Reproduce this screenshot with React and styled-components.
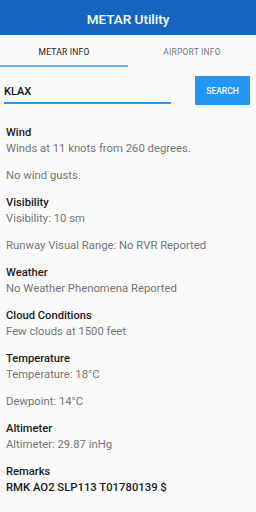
import React from 'react';
import styled, { createGlobalStyle } from 'styled-components';

const GlobalStyle = createGlobalStyle`
  html, body {
    margin: 0;
    padding: 0;
    background: #fafafa;
  }
  body {
    font-family: Roboto, 'Noto Sans', sans-serif;
  }
`;

const Screen = styled.div`
  width: 256px;
  height: 512px;
  background: #fafafa;
  overflow: hidden;
`;

const AppBar = styled.header`
  height: 35px;
  padding-top: 2px;
  box-sizing: border-box;
  background: #1565c0;
  color: #fff;
  display: flex;
  align-items: center;
  justify-content: center;
  font-size: 13.5px;
  font-weight: 500;
  box-shadow: 0 1px 2px rgba(0, 0, 0, 0.2);
`;

const Tabs = styled.nav`
  display: flex;
  height: 32px;
  background: #fafafa;
`;

const Tab = styled.div`
  flex: 1;
  display: flex;
  align-items: center;
  justify-content: center;
  padding-top: 3px;
  font-size: 8.5px;
  letter-spacing: 0.2px;
  color: ${p => (p.active ? '#212121' : '#757575')};
  border-bottom: 2px solid ${p => (p.active ? '#64b5f6' : 'transparent')};
`;

const SearchRow = styled.div`
  display: flex;
  align-items: center;
  justify-content: space-between;
  padding: 9px 6px 0 4px;
`;

const Field = styled.div`
  width: 167px;
  height: 27px;
  display: flex;
  align-items: center;
  padding-top: 4px;
  font-size: 11px;
  font-weight: 500;
  color: #111;
  border-bottom: 2px solid #2196f3;
  box-sizing: border-box;
`;

const Button = styled.button`
  width: 55px;
  height: 29px;
  border: none;
  border-radius: 1px;
  background: #2196f3;
  color: #fff;
  font-family: Roboto, sans-serif;
  font-size: 8.5px;
  font-weight: 500;
  padding: 0;
`;

const Details = styled.main`
  display: flex;
  flex-direction: column;
  gap: 11px;
  padding: 20px 6px 0;
`;

const Section = styled.section`
  display: flex;
  flex-direction: column;
`;

const Heading = styled.div`
  font-size: 11.2px;
  line-height: 16px;
  font-weight: 500;
  color: #1a1a1a;
`;

const Body = styled.div`
  font-size: 11.3px;
  line-height: 16px;
  color: ${p => (p.strong ? '#1a1a1a' : '#757575')};
  font-weight: ${p => (p.strong ? 500 : 400)};
  & + & {
    margin-top: 11px;
  }
`;

const sections = [
  { title: 'Wind', lines: ['Winds at 11 knots from 260 degrees.', 'No wind gusts.'] },
  { title: 'Visibility', lines: ['Visibility: 10 sm', 'Runway Visual Range: No RVR Reported'] },
  { title: 'Weather', lines: ['No Weather Phenomena Reported'] },
  { title: 'Cloud Conditions', lines: ['Few clouds at 1500 feet'] },
  { title: 'Temperature', lines: ['Temperature: 18°C', 'Dewpoint: 14°C'] },
  { title: 'Altimeter', lines: ['Altimeter: 29.87 inHg'] },
  { title: 'Remarks', lines: ['RMK AO2 SLP113 T01780139 $'], strong: true },
];

export default function App() {
  return (
    <Screen>
      <GlobalStyle />
      <AppBar>METAR Utility</AppBar>
      <Tabs>
        <Tab active>METAR INFO</Tab>
        <Tab>AIRPORT INFO</Tab>
      </Tabs>
      <SearchRow>
        <Field>KLAX</Field>
        <Button>SEARCH</Button>
      </SearchRow>
      <Details>
        {sections.map(s => (
          <Section key={s.title}>
            <Heading>{s.title}</Heading>
            {s.lines.map(l => (
              <Body key={l} strong={s.strong}>{l}</Body>
            ))}
          </Section>
        ))}
      </Details>
    </Screen>
  );
}
